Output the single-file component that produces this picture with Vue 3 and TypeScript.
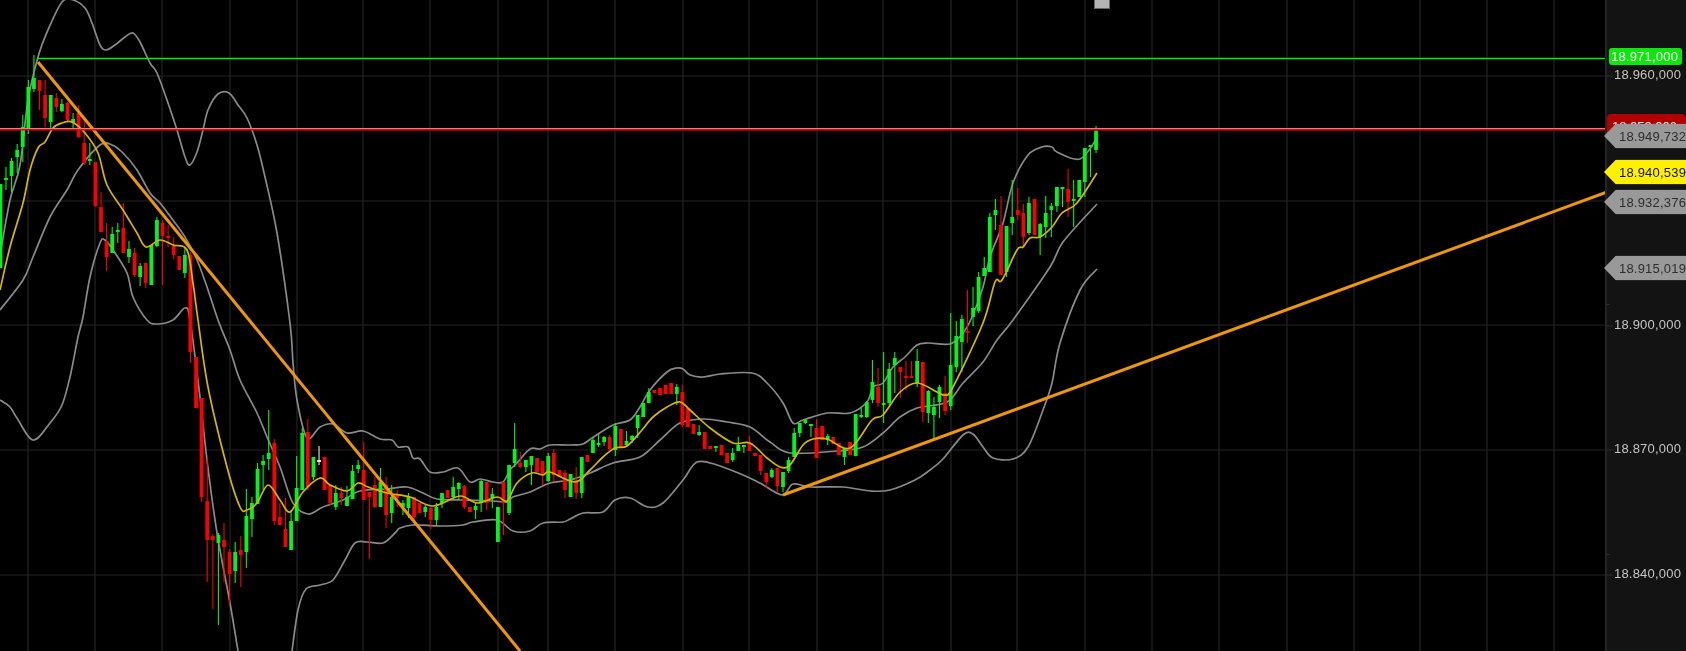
<script setup lang="ts">
import { computed } from "vue";

// kind, body top, body bottom, wick top, wick bottom (chart pixels, one entry per bar)
type Bar = [string, number, number, number, number];

const bars: Bar[] = [
  ["g",184,268,184,268],["g",178,180,167,190],["g",161,176,158,192],["g",150,157,144,173],["g",127,147,115,162],
  ["g",87,129,80,134],["g",78,89,55,92],["r",80,91,80,110],["r",95,118,80,127],["g",95,122,95,128],
  ["r",98,107,93,112],["g",104,111,99,112],["r",103,120,102,121],["g",119,123,113,128],["r",113,137,105,138],
  ["r",143,163,120,165],["g",159,161,143,165],["r",162,206,162,207],["r",207,232,192,232],["r",241,257,223,271],
  ["g",234,253,227,253],["g",230,231,223,243],["r",228,253,203,253],["g",249,257,241,263],["r",253,275,248,277],
  ["g",266,277,263,286],["r",263,283,263,288],["g",245,285,245,285],["g",220,246,217,247],["r",223,236,220,285],
  ["r",236,238,225,247],["r",246,255,237,259],["r",256,270,256,270],["g",255,273,248,278],["r",255,352,252,363],
  ["r",357,408,357,408],["r",398,497,398,502],["r",501,540,458,582],["r",536,540,534,609],["g",535,543,533,625],
  ["r",540,547,523,582],["r",552,574,549,605],["g",552,571,542,583],["r",550,555,536,587],["g",516,552,489,568],
  ["g",503,519,497,537],["g",469,504,463,504],["g",461,465,455,490],["g",453,459,410,470],["r",443,521,439,525],
  ["r",517,525,503,525],["r",529,547,498,547],["g",521,550,510,550],["g",488,521,456,521],["g",433,490,428,490],
  ["r",432,487,419,490],["g",457,477,457,480],["w",460,461,446,465],["r",457,490,457,490],["r",485,503,485,505],
  ["g",493,507,485,510],["r",493,498,487,505],["g",497,506,486,506],["g",471,499,465,499],["g",465,469,460,473],
  ["r",470,500,442,500],["r",492,497,492,559],["r",485,507,477,508],["g",482,507,468,507],["r",485,515,477,528],
  ["g",497,513,485,523],["r",495,498,490,507],["g",503,507,500,515],["g",497,508,493,518],["r",497,517,497,520],
  ["r",503,513,503,513],["g",507,512,505,517],["r",508,520,507,529],["g",507,520,503,526],["g",493,503,493,508],
  ["r",490,498,490,498],["g",487,497,477,498],["g",483,489,482,500],["r",486,507,485,509],["r",507,512,507,512],
  ["g",506,510,503,519],["g",481,503,480,512],["r",482,503,482,510],["g",494,498,488,508],["g",507,542,507,542],
  ["r",482,503,482,535],["g",465,513,465,515],["g",449,463,423,467],["r",463,467,452,468],["g",460,467,460,472],
  ["g",456,465,456,485],["r",458,472,458,472],["r",461,475,461,485],["g",456,481,453,482],["r",453,475,449,482],
  ["r",470,477,470,477],["r",473,490,470,498],["g",474,497,474,497],["r",480,493,467,499],["g",457,493,457,498],
  ["r",455,462,455,462],["g",440,453,437,453],["g",443,444,434,447],["g",437,442,436,446],["r",437,449,435,450],
  ["g",426,450,423,456],["r",429,447,429,447],["g",441,445,431,447],["g",436,440,435,443],["g",415,428,415,438],
  ["g",403,417,403,417],["g",392,403,388,403],["r",390,393,390,393],["r",388,395,388,395],["r",385,394,385,394],
  ["r",383,394,383,394],["g",387,394,384,405],["r",392,425,385,427],["r",408,427,408,427],["r",424,434,424,434],
  ["g",432,435,425,436],["r",432,449,432,449],["r",446,449,446,449],["g",446,448,446,452],["r",445,455,445,455],
  ["r",453,463,453,463],["g",453,460,448,462],["g",445,451,437,451],["g",445,447,445,453],["r",443,451,436,451],
  ["r",453,456,453,456],["r",455,471,455,475],["r",473,482,473,488],["g",470,477,468,478],["r",468,486,468,492],
  ["g",472,487,472,492],["g",460,471,457,473],["g",433,457,428,457],["g",423,433,423,437],["g",420,423,419,424],
  ["g",424,425,424,437],["r",428,458,419,458],["r",426,440,426,440],["g",436,440,434,445],["r",437,444,437,444],
  ["r",443,455,443,455],["g",448,457,448,465],["r",442,455,442,455],["g",414,456,414,456],["g",415,417,407,418],
  ["g",402,417,401,418],["g",382,400,360,403],["r",387,403,368,407],["g",403,405,352,423],["g",369,403,363,405],
  ["g",358,365,352,393],["r",367,372,367,398],["r",376,378,361,390],["r",376,378,361,378],["g",361,383,349,387],
  ["r",362,412,362,422],["g",391,413,390,423],["g",407,415,397,439],["g",387,402,385,418],["r",393,411,376,415],
  ["g",365,406,313,410],["g",336,367,321,372],["g",319,342,315,372],["r",331,333,290,343],["g",308,317,287,326],
  ["g",277,311,272,313],["g",268,276,257,276],["g",217,272,213,272],["g",210,215,199,230],["r",225,275,196,275],
  ["g",226,272,226,277],["g",217,223,180,235],["r",210,215,188,220],["r",213,237,204,246],["g",203,233,197,235],
  ["r",199,235,199,235],["g",224,237,223,255],["g",213,227,196,238],["g",206,210,203,237],["g",187,206,187,212],
  ["g",187,189,187,207],["r",189,202,169,217],["g",199,201,180,227],["g",180,197,180,197],["g",148,182,148,197],
  ["g",145,147,145,177],["g",131,150,126,153],
];

const barColors: Record<string, string> = { g: "#00f51a", r: "#fa0000", w: "#e6e6e6" };

const candles = computed(() =>
  bars.map((b, i) => ({
    x: 0.4 + 5.59 * i,
    color: barColors[b[0]],
    top: b[1],
    height: Math.max(b[2] - b[1], 2),
    wickTop: b[3],
    wickBottom: b[4],
  })),
);

const gridX = [28, 95, 162, 230, 297, 363, 430, 498, 548, 615, 683, 749, 817, 883, 951, 1017, 1085, 1152, 1219, 1287, 1354, 1420, 1487, 1554];
const gridY = [76, 201, 325, 450, 575];

// the indicator lines are smoothed, so turn the sampled points into a curve
const smooth = (raw: string): string => {
  const p = raw.split(" ").map((s) => s.split(",").map(Number));
  let d = `M${p[0][0]} ${p[0][1]}`;
  for (let i = 0; i < p.length - 1; i++) {
    const a = p[Math.max(i - 1, 0)];
    const b = p[i];
    const c = p[i + 1];
    const e = p[Math.min(i + 2, p.length - 1)];
    const c1x = b[0] + (c[0] - a[0]) / 6;
    const c1y = b[1] + (c[1] - a[1]) / 6;
    const c2x = c[0] - (e[0] - b[0]) / 6;
    const c2y = c[1] - (e[1] - b[1]) / 6;
    d += `C${c1x.toFixed(1)} ${c1y.toFixed(1)} ${c2x.toFixed(1)} ${c2y.toFixed(1)} ${c[0]} ${c[1]}`;
  }
  return d;
};

const upperBand =
  "0,255 10,200 20,165 28,100 38,57 48,30 62,2 73,0 85,8 92,23 100,45 106,50 115,45 125,37 133,33 140,42 150,63 157,73 168,103 177,130 185,157 190,165 197,152 203,130 208,110 218,94 229,93 238,105 247,118 257,145 265,177 277,233 290,323 293,363 297,400 307,438 320,427 333,424 347,433 363,431 380,439 392,440 398,447 408,447 413,458 420,459 430,472 443,472 458,468 470,482 480,479 493,482 503,482 510,470 517,463 530,449 540,449 550,445 570,445 583,444 592,438 613,425 630,420 640,407 650,390 667,372 677,368 683,369 690,375 703,377 720,374 752,373 767,383 783,403 793,423 803,420 827,413 850,413 867,402 873,387 883,383 893,367 905,357 917,345 928,343 950,344 963,333 972,317 983,287 990,257 1003,223 1013,183 1028,155 1042,147 1052,147 1057,152 1080,159 1097,138";

const midBand =
  "0,310 23,280 33,257 50,217 67,190 78,170 100,145 112,145 123,153 137,170 150,193 160,203 173,220 185,237 197,260 207,287 218,320 230,350 240,380 257,413 267,437 280,467 293,503 308,514 323,507 343,500 360,491 387,489 407,487 423,493 437,499 463,500 493,501 507,502 513,497 530,492 550,483 570,480 590,473 613,463 640,457 660,440 680,423 703,419 727,422 750,427 770,442 790,453 837,451 863,447 883,433 900,417 917,408 947,402 963,383 983,362 997,340 1013,320 1050,267 1063,242 1097,204";

const lowBand =
  "0,400 10,407 17,418 33,440 50,423 62,405 70,377 78,337 83,317 90,277 100,243 105,240 113,250 127,273 133,297 147,320 157,324 173,320 185,308 190,320 200,397 207,460 217,533 230,603 238,651";

const lowBand2 =
  "292,651 298,610 306,589 320,585 333,580 345,560 355,543 367,542 383,543 395,533 400,528 413,525 440,526 463,525 473,522 497,520 513,531 530,531 543,523 563,522 570,519 583,513 603,512 615,500 630,498 648,507 663,503 683,480 697,462 717,465 743,475 760,483 782,495 793,484 810,487 843,487 871,491 890,490 915,480 930,470 943,459 963,435 973,434 983,447 993,458 1013,459 1028,447 1043,410 1052,383 1060,343 1080,290 1097,269";

const average =
  "0,290 10,247 23,203 30,170 38,148 45,142 53,128 62,123 72,122 85,133 98,153 107,185 123,210 137,233 146,247 160,240 173,245 187,250 193,283 198,320 208,387 227,467 240,507 247,510 257,503 268,485 280,500 290,512 303,492 320,478 330,485 347,491 358,483 368,487 387,493 410,497 433,506 460,496 477,503 497,497 507,501 517,483 532,473 543,475 550,472 575,482 590,470 603,457 615,448 627,446 642,430 653,417 667,407 680,402 690,410 710,428 733,443 750,443 767,458 780,467 790,465 803,445 813,439 827,439 850,448 872,420 883,415 900,392 917,383 937,392 945,395 953,387 983,323 995,282 1002,280 1017,250 1023,247 1030,238 1040,237 1052,227 1062,213 1077,203 1097,173";

const bandPaths = [upperBand, midBand, lowBand, lowBand2].map(smooth);
const averagePath = smooth(average);

const axisLabels = [
  { text: "18.960,000", y: 74 },
  { text: "18.900,000", y: 324 },
  { text: "18.870,000", y: 448 },
  { text: "18.840,000", y: 573 },
];
const axisMarks = [304, 554];

const priceTags = [
  { text: "18.949,732", y: 136, cls: "gray" },
  { text: "18.940,539", y: 172, cls: "yellow" },
  { text: "18.932,376", y: 202, cls: "gray" },
  { text: "18.915,019", y: 268, cls: "gray" },
];
</script>

<template>
  <div class="terminal">
    <div class="plot">
      <svg class="chart" width="1607" height="651" viewBox="0 0 1607 651">
        <g class="grid">
          <line v-for="x in gridX" :key="'x' + x" :x1="x" :x2="x" y1="0" y2="651" />
          <line v-for="y in gridY" :key="'y' + y" x1="0" x2="1607" :y1="y" :y2="y" />
        </g>

        <g class="bands">
          <path v-for="(d, i) in bandPaths" :key="i" :d="d" />
        </g>

        <g v-for="(c, i) in candles" :key="i">
          <line :x1="c.x" :x2="c.x" :y1="c.wickTop" :y2="c.wickBottom" :stroke="c.color" stroke-width="1.1" />
          <rect :x="c.x - 1.9" :y="c.top" width="3.8" :height="c.height" :fill="c.color" />
        </g>

        <path class="average" :d="averagePath" />

        <line class="trend" x1="38" y1="62" x2="520" y2="651" />
        <line class="trend" x1="783" y1="495" x2="1607" y2="192" />
        <line class="level-green" x1="38" y1="58.5" x2="1607" y2="58.5" />
        <line class="level-red" x1="0" y1="129.6" x2="1607" y2="129.6" />
        <line class="level-red-core" x1="0" y1="128.5" x2="1607" y2="128.5" />
      </svg>
      <div class="marker"></div>
    </div>

    <div class="axis">
      <span v-for="m in axisMarks" :key="m" class="mark" :style="{ top: m + 'px' }"></span>
      <div v-for="l in axisLabels" :key="l.text" class="axis-label" :style="{ top: l.y + 'px' }">{{ l.text }}</div>
      <div class="tag-green">18.971,000</div>
      <div class="tag-red">18.953,000</div>
      <div v-for="t in priceTags" :key="t.text" class="tag" :class="t.cls" :style="{ top: t.y + 'px' }">{{ t.text }}</div>
    </div>
  </div>
</template>

<style scoped>
.terminal {
  display: flex;
  width: 1686px;
  height: 651px;
  overflow: hidden;
  background: #000;
  font-family: "Liberation Sans", Arial, sans-serif;
  filter: blur(0.5px);
}

.plot {
  position: relative;
  flex: 0 0 1606px;
  overflow: hidden;
}

.chart {
  display: block;
}

.grid line {
  stroke: #242424;
  stroke-width: 1.2;
}

.bands path {
  fill: none;
  stroke: #8a8a8a;
  stroke-width: 1.7;
}

.average {
  fill: none;
  stroke: #d6b800;
  stroke-width: 1.7;
}

.trend {
  stroke: #ee9808;
  stroke-width: 3;
}

.level-green {
  stroke: #00f000;
  stroke-width: 1.4;
}

.level-red {
  stroke: #ee0000;
  stroke-width: 2;
}

.level-red-core {
  stroke: #d08888;
  stroke-width: 1;
}

.marker {
  position: absolute;
  left: 1094px;
  top: -2px;
  width: 14px;
  height: 9px;
  background: #b4b4b4;
  border: 1px solid #666;
}

.axis {
  position: relative;
  flex: 1;
  background: #131313;
  border-left: 2px solid #252525;
  margin-left: -1px;
}

.axis-label {
  position: absolute;
  left: 7px;
  transform: translateY(-50%);
  color: #c4c4c4;
  font-size: 13px;
  letter-spacing: 0.2px;
  white-space: nowrap;
}

.axis-label::before {
  content: "";
  position: absolute;
  left: -8px;
  top: 60%;
  width: 7px;
  height: 1px;
  background: #2c2c2c;
}

.mark {
  position: absolute;
  left: 0;
  width: 3px;
  height: 1px;
  background: #2c2c2c;
}

.tag-green {
  position: absolute;
  left: 2px;
  top: 48px;
  width: 73px;
  height: 17px;
  line-height: 17px;
  padding-left: 2px;
  box-sizing: border-box;
  border-radius: 3px;
  background: #0ce80c;
  color: #fff;
  font-size: 13px;
  letter-spacing: 0.2px;
  white-space: nowrap;
}

.tag-red {
  position: absolute;
  left: 0;
  right: 0;
  top: 114px;
  height: 20px;
  padding: 6px 0 0 5px;
  box-sizing: border-box;
  border-radius: 4px 4px 0 0;
  background: #b00000;
  color: #fff;
  font-size: 13px;
  line-height: 14px;
  white-space: nowrap;
}

.tag {
  position: absolute;
  left: -3px;
  width: 83px;
  height: 25px;
  line-height: 25px;
  padding-left: 15px;
  box-sizing: border-box;
  transform: translateY(-50%);
  clip-path: polygon(0 50%, 12px 0, 100% 0, 100% 100%, 12px 100%);
  color: #2e2e2e;
  font-size: 13px;
  letter-spacing: 0.2px;
  white-space: nowrap;
}

.tag.gray {
  background: #999;
}

.tag.yellow {
  background: #fff000;
  color: #111;
}
</style>
